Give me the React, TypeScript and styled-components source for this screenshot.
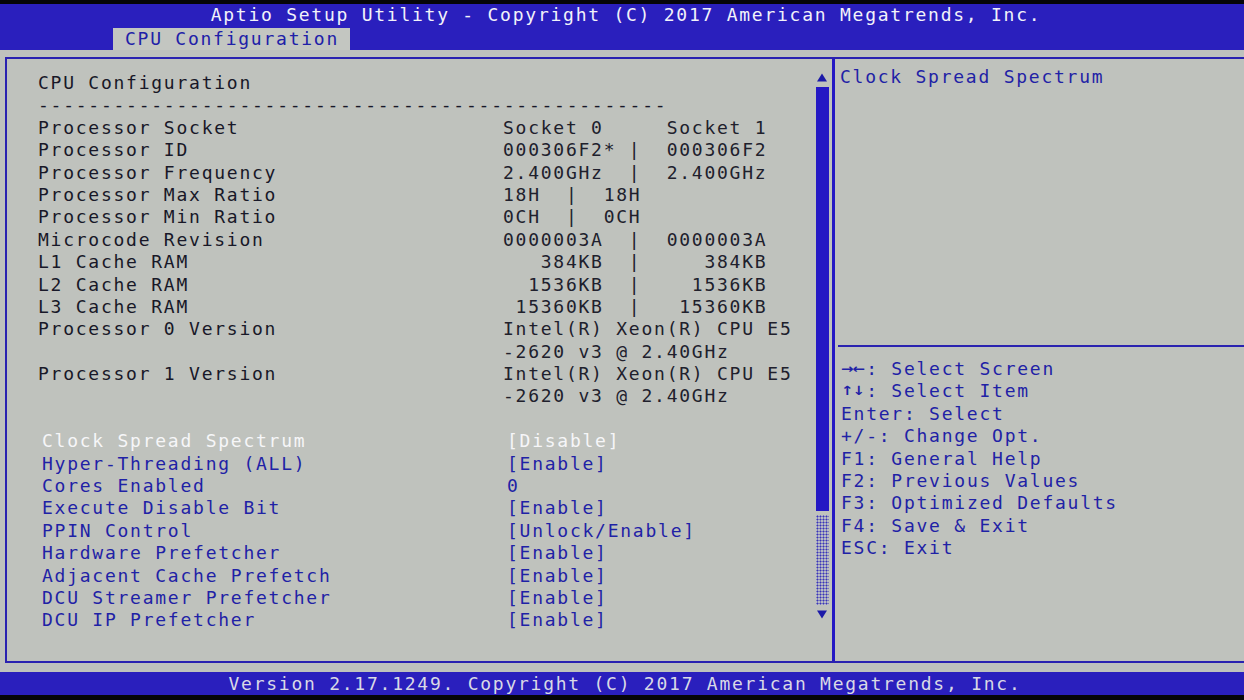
import styled, { createGlobalStyle } from 'styled-components';

const info = [
  ['Processor Socket', 'Socket 0     Socket 1'],
  ['Processor ID', '000306F2* |  000306F2'],
  ['Processor Frequency', '2.400GHz  |  2.400GHz'],
  ['Processor Max Ratio', '18H  |  18H'],
  ['Processor Min Ratio', '0CH  |  0CH'],
  ['Microcode Revision', '0000003A  |  0000003A'],
  ['L1 Cache RAM', '   384KB  |     384KB'],
  ['L2 Cache RAM', '  1536KB  |    1536KB'],
  ['L3 Cache RAM', ' 15360KB  |   15360KB'],
  ['Processor 0 Version', 'Intel(R) Xeon(R) CPU E5'],
  ['', '-2620 v3 @ 2.40GHz'],
  ['Processor 1 Version', 'Intel(R) Xeon(R) CPU E5'],
  ['', '-2620 v3 @ 2.40GHz'],
  ['', ''],
];

const settings = [
  { name: 'Clock Spread Spectrum', value: '[Disable]', active: true },
  { name: 'Hyper-Threading (ALL)', value: '[Enable]' },
  { name: 'Cores Enabled', value: '0' },
  { name: 'Execute Disable Bit', value: '[Enable]' },
  { name: 'PPIN Control', value: '[Unlock/Enable]' },
  { name: 'Hardware Prefetcher', value: '[Enable]' },
  { name: 'Adjacent Cache Prefetch', value: '[Enable]' },
  { name: 'DCU Streamer Prefetcher', value: '[Enable]' },
  { name: 'DCU IP Prefetcher', value: '[Enable]' },
];

// [key, description, arrow]; arrow keys use the chunky BIOS arrow glyphs
const keys = [
  ['→←', ': Select Screen', true],
  ['↑↓', ': Select Item', true],
  ['Enter', ': Select'],
  ['+/-', ': Change Opt.'],
  ['F1', ': General Help'],
  ['F2', ': Previous Values'],
  ['F3', ': Optimized Defaults'],
  ['F4', ': Save & Exit'],
  ['ESC', ': Exit'],
] as const;

const App = () => {
  return (
    <>
      <GlobalStyle />
      <Screen>
        <TopBar>
          <Title>Aptio Setup Utility - Copyright (C) 2017 American Megatrends, Inc.</Title>
          <TabRow>
            <Tab>CPU Configuration</Tab>
          </TabRow>
        </TopBar>
        <Body>
          <Frame>
            <LeftPanel>
              <Content>
                <Line>CPU Configuration</Line>
                <Line>{'-'.repeat(50)}</Line>
                {info.map(([label, value], i) => (
                  <Row key={i}>
                    <Label>{label}</Label>
                    <Value>{value}</Value>
                  </Row>
                ))}
                <Settings>
                  {settings.map((s) => (
                    <Row key={s.name}>
                      <Label $blue $active={s.active}>
                        {s.name}
                      </Label>
                      <Value $blue $active={s.active}>
                        {s.value}
                      </Value>
                    </Row>
                  ))}
                </Settings>
              </Content>
              <Scrollbar>
                <Arrow viewBox="0 0 12 10">
                  <polygon points="6,1 11,9 1,9" />
                </Arrow>
                <Thumb />
                <Track />
                <Arrow viewBox="0 0 12 10">
                  <polygon points="1,1 11,1 6,9" />
                </Arrow>
              </Scrollbar>
            </LeftPanel>
            <Divider />
            <RightPanel>
              <HelpTop>
                <Line $blue>Clock Spread Spectrum</Line>
              </HelpTop>
              <Rule />
              <KeyList>
                {keys.map(([k, desc, arrow]) =>
                  arrow ? (
                    <Line key={k} $blue>
                      <ArrowKeys>{k}</ArrowKeys>
                      {desc}
                    </Line>
                  ) : (
                    <Line key={k} $blue>
                      {k}
                      {desc}
                    </Line>
                  )
                )}
              </KeyList>
            </RightPanel>
          </Frame>
        </Body>
        <BottomBar>Version 2.17.1249. Copyright (C) 2017 American Megatrends, Inc.</BottomBar>
      </Screen>
    </>
  );
};

export default App;

const GlobalStyle = createGlobalStyle`
  body {
    margin: 0;
    background: #000;
  }
`;

const Screen = styled.div`
  width: 1244px;
  height: 700px;
  background: #050508;
  padding-top: 4px;
  box-sizing: border-box;
  display: flex;
  flex-direction: column;
  overflow: hidden;
  font-family: 'DejaVu Sans Mono', 'Liberation Mono', monospace;
  font-size: 18px;
  letter-spacing: 1.75px;
  line-height: 22.4px;
  white-space: pre;
`;

const TopBar = styled.div`
  height: 46px;
  background: #2a1fbd;
  display: flex;
  flex-direction: column;
`;

const Title = styled.div`
  height: 24px;
  line-height: 22px;
  text-align: center;
  color: #f2f2fa;
  padding-left: 8px;
`;

const TabRow = styled.div`
  display: flex;
  padding-left: 113px;
`;

const Tab = styled.div`
  width: 237px;
  height: 22px;
  line-height: 22px;
  box-sizing: border-box;
  padding-left: 12px;
  background: #c3c6c1;
  color: #2020a8;
`;

const Body = styled.div`
  height: 622px;
  background: #bfc2bd;
  box-sizing: border-box;
  padding: 7px 0 9px 5px;
  display: flex;
`;

const Frame = styled.div`
  flex: 1;
  display: flex;
  border: 2px solid #2a22b0;
  border-right: none;
`;

const LeftPanel = styled.div`
  width: 825px;
  display: flex;
  box-sizing: border-box;
  padding: 13px 3px 0 31px;
`;

const Content = styled.div`
  flex: 1;
  display: flex;
  flex-direction: column;
`;

const Line = styled.div<{ $blue?: boolean }>`
  height: 22.4px;
  color: ${(p) => (p.$blue ? '#1f22a6' : '#181828')};
`;

const ArrowKeys = styled.span`
  display: inline-block;
  width: 25.2px;
  vertical-align: top;
  font-family: 'DejaVu Sans', sans-serif;
  font-size: 15px;
  font-weight: 700;
  letter-spacing: -1px;
  transform: scaleY(0.85);
`;

const Row = styled.div`
  display: grid;
  grid-template-columns: 465px 1fr;
  height: 22.4px;
`;

const Label = styled.span<{ $blue?: boolean; $active?: boolean }>`
  color: ${(p) => (p.$active ? '#f6f6f8' : p.$blue ? '#1f22a6' : '#181828')};
`;

const Value = styled.span<{ $blue?: boolean; $active?: boolean }>`
  color: ${(p) => (p.$active ? '#f6f6f8' : p.$blue ? '#1f22a6' : '#20202c')};
`;

const Settings = styled.div`
  display: flex;
  flex-direction: column;
  padding-left: 4px;
`;

const Scrollbar = styled.div`
  width: 14px;
  display: flex;
  flex-direction: column;
  align-items: center;
  gap: 4px;
`;

const Arrow = styled.svg`
  width: 12px;
  height: 11px;
  fill: #1c1aa8;
`;

const Thumb = styled.div`
  width: 13px;
  height: 424px;
  background: #2418c4;
`;

const Track = styled.div`
  width: 13px;
  height: 90px;
  background-color: #b8bbc4;
  background-image: radial-gradient(circle, #3a34b8 0.9px, transparent 1.1px);
  background-size: 3px 3px;
`;

const Divider = styled.div`
  width: 3px;
  background: #2418c4;
`;

const RightPanel = styled.div`
  flex: 1;
  display: flex;
  flex-direction: column;
`;

const HelpTop = styled.div`
  height: 286px;
  box-sizing: border-box;
  padding: 7px 0 0 5px;
`;

const Rule = styled.div`
  height: 2px;
  margin-left: 3px;
  background: #2a22b0;
`;

const KeyList = styled.div`
  display: flex;
  flex-direction: column;
  padding: 11px 0 0 6px;
`;

const BottomBar = styled.div`
  height: 23px;
  line-height: 23px;
  background: #2a1fbd;
  color: #d9d9e6;
  text-align: center;
  padding-left: 6px;
`;
